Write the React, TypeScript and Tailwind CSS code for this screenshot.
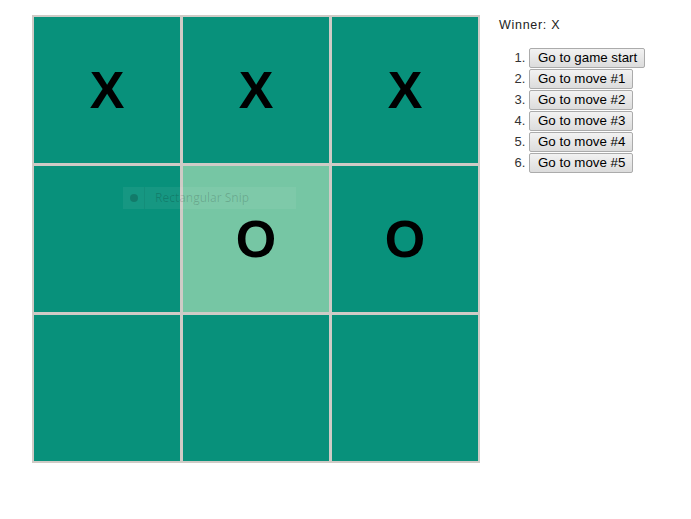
import React from 'react'

const squares: (string | null)[] = ['X', 'X', 'X', null, 'O', 'O', null, null, null]
const moves = ['Go to game start', 'Go to move #1', 'Go to move #2', 'Go to move #3', 'Go to move #4', 'Go to move #5']

function Square({ value, highlight }: { value: string | null; highlight?: boolean }) {
  return (
    <div
      className={`flex h-[146px] w-[146px] items-center justify-center text-[52px] font-bold leading-none text-black ${
        highlight ? 'bg-[#76c6a4]' : 'bg-[#08917b]'
      }`}
      style={{ fontFamily: '"Liberation Sans", Arial, sans-serif' }}
    >
      {value}
    </div>
  )
}

export default function App() {
  return (
    <div className="relative h-[519px] w-[691px] bg-white" style={{ fontFamily: '"Liberation Sans", Arial, sans-serif' }}>
      <div className="flex items-start pl-[32px] pt-[15px]">
        {/* Board */}
        <div className="grid grid-cols-[146px_146px_146px] gap-[3px] bg-[#cfcbc6] p-[2px]">
          {squares.map((v, i) => (
            <Square key={i} value={v} highlight={i === 4} />
          ))}
        </div>

        {/* Game info */}
        <div className="ml-[19px] pt-[3px] text-[#222]">
          <div className="text-[12.5px] leading-[15px] tracking-[0.7px]">Winner: X</div>
          <ol className="mt-[15px] list-decimal pl-[30px] text-[13px] text-[#333]">
            {moves.map((m) => (
              <li key={m} className="h-[21px] leading-[20px]">
                <button
                  type="button"
                  className="h-[20px] rounded-[2px] border border-[#ababab] bg-gradient-to-b from-[#f2f2f2] to-[#dcdcdc] pl-[8px] pr-[7px] text-[13.33px] leading-[18px] text-black"
                  style={{ fontFamily: '"Liberation Sans", Arial, sans-serif' }}
                >
                  {m}
                </button>
              </li>
            ))}
          </ol>
        </div>
      </div>

      {/* Snipping tool ghost overlay */}
      <div className="pointer-events-none absolute left-[123px] top-[187px] flex h-[22px] w-[173px] items-center bg-white/[0.06]">
        <div className="flex h-full w-[22px] items-center justify-center border-r border-black/[0.06]">
          <span className="h-[8px] w-[8px] rounded-full bg-black/[0.18]" />
        </div>
        <span
          className="ml-[10px] text-[12px] text-black/[0.16]"
          style={{ fontFamily: '"Open Sans", "Noto Sans", sans-serif' }}
        >
          Rectangular Snip
        </span>
      </div>
    </div>
  )
}
